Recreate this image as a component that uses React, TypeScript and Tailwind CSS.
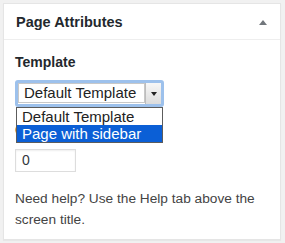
export default function App() {
  return (
    <div className="relative w-[285px] h-[243px] bg-[#f1f1f1] pt-[3px] pl-[3px] font-['Liberation_Sans',Arial,sans-serif] text-[#23282d]">
      <div className="w-[278px] h-[237px] bg-white border border-[#e5e5e5] shadow-[0_1px_1px_rgba(0,0,0,0.04)]">
        <div className="h-[36px] border-b border-[#eeeeee] flex items-center justify-between pl-[12px] pr-[13px]">
          <h2 className="text-[14.5px] font-bold leading-[20px] mt-[1px]">Page Attributes</h2>
          <svg width="8" height="5" viewBox="0 0 8 5" className="mt-[1px]">
            <path d="M4 0 L8 5 L0 5 Z" fill="#72777c" />
          </svg>
        </div>

        <div className="px-[11px] pt-[12px]">
          <p className="text-[14px] font-bold leading-[20px]">Template</p>

          <div className="mt-[8px] w-[149px] h-[27px] border-[3px] border-[#9dc1ec] rounded-[3px] flex">
            <div className="flex-1 h-[20px] border border-[#c8c8c8] bg-white pl-[5px] text-[15px] leading-[18px] text-[#222]">
              Default Template
            </div>
            <div className="w-[16px] h-[21px] bg-gradient-to-b from-[#f7f7f7] to-[#dcdcdc] border-l border-[#bdbdbd] flex items-center justify-center">
              <svg width="6" height="4" viewBox="0 0 6 4">
                <path d="M0 0 L6 0 L3 4 Z" fill="#222" />
              </svg>
            </div>
          </div>

          <p className="mt-[13px] text-[14px] font-bold leading-[20px]">Order</p>

          <div className="mt-[9px] w-[61px] h-[23px] border border-[#dddddd] shadow-[inset_0_1px_2px_rgba(0,0,0,0.07)] pl-[6px] text-[14px] leading-[21px] text-[#32373c]">
            0
          </div>

          <p className="mt-[16px] text-[13.7px] leading-[21px] text-[#444]">
            Need help? Use the Help tab above the screen title.
          </p>
        </div>
      </div>

      <div className="absolute left-[16px] top-[107px] w-[147px] border border-[#5c5c5c] bg-white text-[15px] leading-[17px]">
        <div className="pl-[5px] h-[17px] text-[#222]">Default Template</div>
        <div className="pl-[5px] h-[17px] bg-[#0b5fd6] text-white">Page with sidebar</div>
      </div>
    </div>
  );
}
